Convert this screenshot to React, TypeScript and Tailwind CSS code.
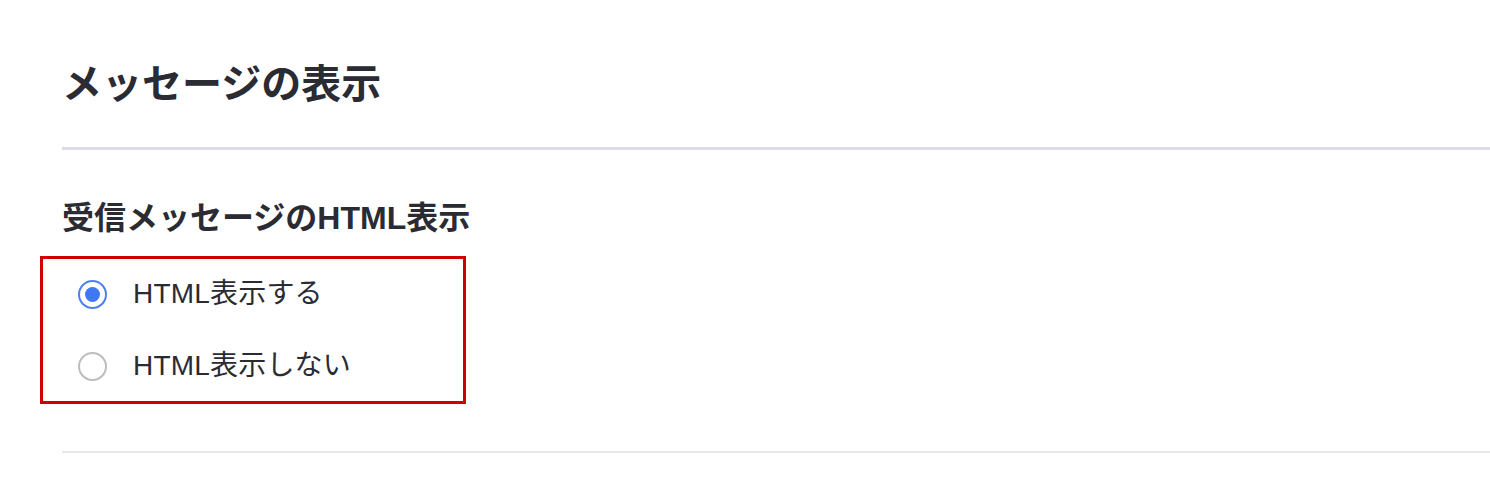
import { useState } from 'react'

const options = [
  { value: 'html', label: 'HTML表示する' },
  { value: 'text', label: 'HTML表示しない' },
]

const App = (): JSX.Element => {
  const [selected, setSelected] = useState('html')

  return (
    <div
      className="min-h-[500px] w-[1490px] bg-white text-[#2a2b33]"
      style={{ fontFamily: '"Liberation Sans", "Noto Sans CJK JP", sans-serif' }}
    >
      <div className="pl-[62px] pt-[54px]">
        {/* Section title */}
        <h1 className="h-[60px] text-[40px] font-bold leading-[60px]">
          メッセージの表示
        </h1>
        <div className="mt-[33px] h-[3px] bg-[#dcdbeb]" />

        {/* HTML display setting */}
        <h2 className="mt-[44px] h-[48px] text-[32px] font-bold leading-[48px]">
          受信メッセージのHTML表示
        </h2>

        <div className="mt-[14px] ml-[-22px] flex w-[426px] flex-col gap-[2px] border-[3px] border-[#d10000]">
          {options.map((opt) => {
            const checked = selected === opt.value
            return (
              <label
                key={opt.value}
                className="flex h-[70px] cursor-pointer items-center pl-[35px]"
                onClick={() => setSelected(opt.value)}
              >
                <span
                  className={
                    checked
                      ? 'flex h-[29px] w-[29px] items-center justify-center rounded-full border-2 border-[#4c7ff0]'
                      : 'flex h-[29px] w-[29px] items-center justify-center rounded-full border-2 border-[#bdbdbd]'
                  }
                >
                  {checked && <span className="h-[15px] w-[15px] rounded-full bg-[#3f78f2]" />}
                </span>
                <span className="ml-[26px] text-[28px] leading-none tracking-[0.2px]">{opt.label}</span>
              </label>
            )
          })}
        </div>

        <div className="mt-[47px] h-[2px] bg-[#e8e8e8]" />
      </div>
    </div>
  )
}

export default App
